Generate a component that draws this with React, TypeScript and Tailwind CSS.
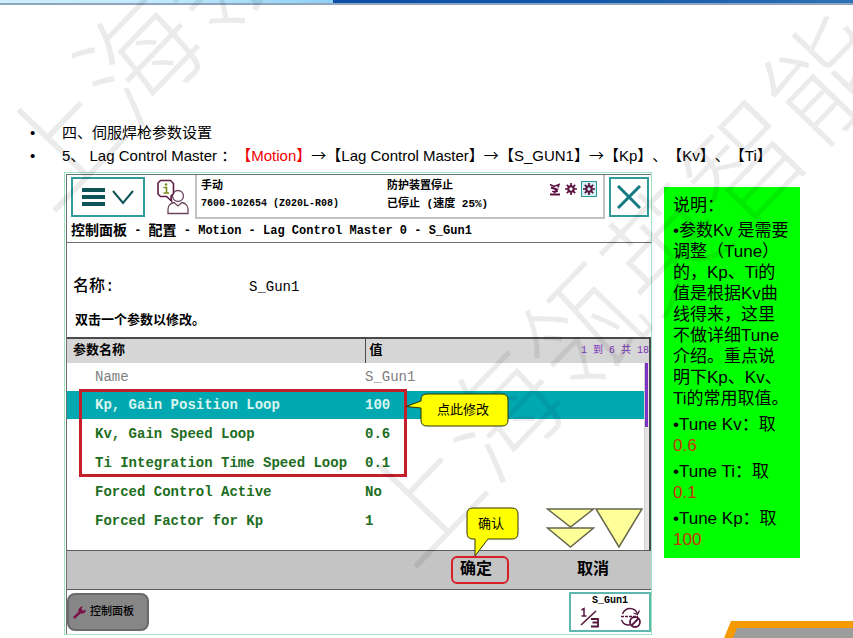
import { useState } from 'react';
import clsx from 'clsx';

interface Parameter {
  name: string;
  value: string;
  readOnly?: boolean;
}

const PARAMETERS: Parameter[] = [
  { name: 'Name', value: 'S_Gun1', readOnly: true },
  { name: 'Kp, Gain Position Loop', value: '100' },
  { name: 'Kv, Gain Speed Loop', value: '0.6' },
  { name: 'Ti Integration Time Speed Loop', value: '0.1' },
  { name: 'Forced Control Active', value: 'No' },
  { name: 'Forced Factor for Kp', value: '1' },
];

const NOTES = [
  { label: 'Tune Kv：取', value: '0.6' },
  { label: 'Tune Ti：取', value: '0.1' },
  { label: 'Tune Kp：取', value: '100' },
];

function MenuIcon() {
  return (
    <svg width="52" height="20" viewBox="0 0 52 20" fill="none">
      <path d="M0 3H23M0 10H23M0 17H23" stroke="#0d5457" strokeWidth="4" />
      <path d="M31 4L41 16L51 4" stroke="#0d5457" strokeWidth="2" />
    </svg>
  );
}

function OperatorIcon() {
  return (
    <svg width="32" height="36" viewBox="0 0 32 36" fill="none">
      <circle cx="21" cy="17" r="5.5" stroke="#6b4560" strokeWidth="1.3" />
      <path
        d="M11 34.5V30C11 26.500 14 24 17 23.500L21 27L25 23.500C28 24 31 26.500 31 30V34.500Z"
        stroke="#6b4560"
        strokeWidth="1.3"
        fill="#fff"
      />
      <path
        d="M3.500 1.500H13.500L16.500 4.500V14.500L14 17L14.500 22L9.500 17.500H3.500L1 15V4Z"
        stroke="#5e1c44"
        strokeWidth="1.6"
        fill="#fff"
      />
      <circle cx="9" cy="5.500" r="1.300" fill="#7f8a1c" />
      <path d="M6.500 8.500H9.500V13.500M6.500 14H12" stroke="#7f8a1c" strokeWidth="1.6" />
    </svg>
  );
}

function RobotIcon() {
  return (
    <svg width="12" height="13" viewBox="0 0 12 13" fill="none" stroke="#5c1240">
      <path d="M1 11.500H11" strokeWidth="2" />
      <path d="M5 10L8 6.500L2 4.500" strokeWidth="2" />
      <path d="M1 1.500L5 3.500L10 1.500L9 4.500" strokeWidth="1.500" />
      <path d="M3 8.500H9" strokeWidth="1.200" />
    </svg>
  );
}

function GearIcon() {
  return (
    <svg width="12" height="12" viewBox="0 0 12 12" fill="none" stroke="#5c1240">
      <circle cx="6" cy="6" r="2.700" strokeWidth="2" />
      <path d="M6 0V3M6 9V12M0 6H3M9 6H12M1.800 1.800L3.800 3.800M8.200 8.200L10.200 10.200M10.200 1.800L8.200 3.800M3.800 8.200L1.800 10.200" strokeWidth="1.700" />
    </svg>
  );
}

function CloseIcon() {
  return (
    <svg width="24" height="24" viewBox="0 0 24 24" stroke="#137a82" strokeWidth="3">
      <path d="M1 1L23 23M23 1L1 23" />
    </svg>
  );
}

function WrenchIcon() {
  return (
    <svg width="13" height="13" viewBox="0 0 13 13">
      <path
        d="M1.500 13L0 11L5.500 6C5 3.200 6.800 .8 9.800 .3L8.300 3L10 4.800L12.800 3.600C13 6.300 10.800 8.200 7.500 7.500Z"
        fill="#7a1048"
      />
    </svg>
  );
}

function SpeedIcon() {
  return (
    <svg width="22" height="22" viewBox="0 0 22 22" fill="none" stroke="#54163d">
      <path d="M3.500 3L6 1.500V9M3.500 9H8.500" strokeWidth="1.500" />
      <path d="M3 18L18 4" strokeWidth="1.600" />
      <path d="M13 12H20V19.500H13M14.500 15.500H20" strokeWidth="1.800" />
    </svg>
  );
}

function CycleIcon() {
  return (
    <svg width="22" height="22" viewBox="0 0 22 22" fill="none" stroke="#54163d">
      <path d="M2.500 7C4 3.500 6.500 1.500 10 1.500C13.500 1.500 16.500 4 17.500 7" strokeWidth="1.500" />
      <path d="M19.500 3.500L17.500 7.500L13.500 6" strokeWidth="1.300" />
      <path d="M1 9.500H18" strokeWidth="1.500" strokeDasharray="3 1" />
      <path d="M1.500 13C3 16.500 6 18.500 10 18" strokeWidth="1.500" />
      <circle cx="15" cy="15" r="5" strokeWidth="1.800" fill="#fff" />
      <path d="M11.500 18.500L18.500 11.500" strokeWidth="1.800" />
    </svg>
  );
}

function PageDownIcon() {
  return (
    <svg width="49" height="40" viewBox="0 0 49 40" fill="#ffff99" stroke="#66664d" strokeWidth="1.500">
      <path d="M1.500 1H47.500L24.500 19Z" />
      <path d="M1.500 20H47.500L24.500 39Z" />
    </svg>
  );
}

function LineDownIcon() {
  return (
    <svg width="48" height="40" viewBox="0 0 48 40" fill="#ffff99" stroke="#66664d" strokeWidth="1.500">
      <path d="M1 1H47L24 39Z" />
    </svg>
  );
}

function Arrow() {
  return <span className="font-['Noto_Sans_CJK_SC',sans-serif] leading-none">→</span>;
}

function Frame() {
  const [selected, setSelected] = useState(1);

  return (
    <section className="min-w-0 flex-1 border border-[#9fe3c0] bg-white pt-px pl-px font-['Liberation_Mono','Noto_Sans_CJK_SC',monospace] text-black">
      <div className="border-t border-l border-[#6f6f6f]">
        {/* Status bar */}
        <header className="flex h-11 items-center">
          <button
            aria-label="菜单"
            className="ml-1 flex h-10 w-[74px] shrink-0 items-center justify-center border-2 border-[#2f9c9c] bg-white"
          >
            <MenuIcon />
          </button>
          <div className="ml-3 shrink-0">
            <OperatorIcon />
          </div>
          <div className="ml-1.5 flex h-full min-w-0 flex-1 border-x-2 border-b-2 border-[#c4c0c4] pt-0.5 pl-1 font-bold">
            <div className="w-[186px] text-[11px] leading-[18px]">
              <p>手动</p>
              <p className="text-[10px] leading-[18px]">7600-102654 (Z020L-R08)</p>
            </div>
            <div className="flex-1 text-[11px] leading-[18px]">
              <p>防护装置停止</p>
              <p>已停止 (速度 25%)</p>
            </div>
            <div className="mt-1 mr-1.5 flex h-4 items-center gap-1">
              <RobotIcon />
              <GearIcon />
              <span className="border border-[#2f9c9c] bg-[#d5f0f0] p-px">
                <GearIcon />
              </span>
            </div>
          </div>
          <button
            aria-label="关闭"
            className="mr-0.5 ml-1 flex size-10 shrink-0 items-center justify-center border-2 border-[#2f9c9c] bg-white"
          >
            <CloseIcon />
          </button>
        </header>

        <h2 className="flex h-6 items-center border-b border-[#6f6f6f] pl-1 text-xs font-bold whitespace-pre">
          <span className="text-sm">控制面板</span> - <span className="text-sm">配置</span> - Motion - Lag Control Master 0 - S_Gun1
        </h2>

        <div className="h-[94px] pt-8 pl-1.5">
          <p className="flex items-center leading-6">
            <span className="w-44 text-base font-medium">名称:</span>
            <span className="text-sm font-medium">S_Gun1</span>
          </p>
          <p className="mt-3 pl-0.5 text-[13px] leading-5 font-bold">双击一个参数以修改。</p>
        </div>

        {/* Parameter list */}
        <div className="relative border-t-2 border-r-2 border-[#4a4a4a] pb-[15px]">
          <table className="w-full table-fixed border-collapse text-left text-sm">
            <thead>
              <tr className="h-6 bg-[#d6d6d6] text-[13px]">
                <th className="w-[298px] pl-1.5">参数名称</th>
                <th className="border-l border-[#4a4a4a] pl-1">
                  <span className="flex items-center justify-between">
                    值
                    <span className="text-[10px] font-normal text-[#7a35b8]">1 到 6 共 18</span>
                  </span>
                </th>
              </tr>
            </thead>
            <tbody>
              {PARAMETERS.map((param, i) => (
                <tr
                  key={param.name}
                  onClick={() => setSelected(i)}
                  className={clsx(
                    i < 2 ? 'h-7' : 'h-[29px]',
                    param.readOnly && 'text-[#808080]',
                    !param.readOnly && 'font-bold',
                    i === selected ? 'bg-[#00a9b2] text-[#d9f5ee]' : !param.readOnly && 'text-[#1d6e22]'
                  )}
                >
                  <td className="pl-7">{param.name}</td>
                  <td>{param.value}</td>
                </tr>
              ))}
            </tbody>
          </table>

          <div className="absolute top-6 right-0 bottom-0 w-[5px] border-l border-[#d0d0d0] bg-[#e4e4e4]">
            <div className="h-16 w-[3px] bg-[#7c33c4]" />
          </div>
          <div className="absolute right-1.5 bottom-0.5 flex">
            <button aria-label="下一页">
              <PageDownIcon />
            </button>
            <button aria-label="下一行">
              <LineDownIcon />
            </button>
          </div>

          {/* Highlight around the tuning parameters */}
          <div className="pointer-events-none absolute top-[50px] left-3 h-[88px] w-[328px] border-3 border-[#c4202c]" />
          <div className="absolute top-[54px] left-[338px] z-20 font-['Noto_Sans_CJK_SC',sans-serif]">
            <svg width="104" height="35" viewBox="0 0 104 35" fill="#ffff00" stroke="#333300">
              <path d="M22 1H97Q103 1 103 7V27Q103 33 97 33H22Q16 33 16 27V15L1 13.500L16 8V7Q16 1 22 1Z" />
            </svg>
            <span className="absolute inset-0 pt-1 pl-8 text-[13px] leading-6">点此修改</span>
          </div>
        </div>

        {/* Commands */}
        <div className="relative flex h-10 items-center justify-end border-t border-b border-[#5c5c5c] bg-[#c4c4c4] pr-[31px] text-base font-bold">
          <div className="relative mr-[57px]">
            <button className="h-7 w-[58px] rounded-md border-2 border-[#d81e28] pr-2">确定</button>
            <div className="absolute bottom-[27px] left-[15px] z-20 font-['Noto_Sans_CJK_SC',sans-serif] font-normal">
              <svg width="54" height="50" viewBox="0 0 54 50" fill="#ffff00" stroke="#333300">
                <path d="M7 1H46Q52 1 52 7V26Q52 32 46 32H22L9 49V32H7Q1 32 1 26V7Q1 1 7 1Z" />
              </svg>
              <span className="absolute inset-0 pt-1 pl-3 text-[13px] leading-6">确认</span>
            </div>
          </div>
          <button className="h-7 w-[54px]">取消</button>
        </div>

        {/* Task bar */}
        <footer className="flex h-11 items-center justify-between">
          <button className="flex h-[38px] w-[82px] items-center gap-1 rounded-lg border-2 border-[#6a6a6a] bg-[#868686] pl-1 text-[11px] font-medium">
            <WrenchIcon />
            控制面板
          </button>
          <button className="flex h-10 w-[82px] flex-col items-center justify-center border-2 border-[#5fb8b0] bg-white text-[10px] leading-3 font-bold">
            S_Gun1
            <span className="flex gap-5">
              <SpeedIcon />
              <CycleIcon />
            </span>
          </button>
        </footer>
      </div>
    </section>
  );
}

export default function App() {
  return (
    <div className="relative min-h-screen overflow-hidden bg-white font-['Liberation_Sans','Noto_Sans_CJK_SC',sans-serif] text-black">
      <div className="flex h-[5px] border-b-2 border-[#8fa5bd]">
        <div className="w-[39%] bg-linear-to-r from-[#cfeefb] via-[#bfe9fb] to-[#8fd0f5]" />
        <div className="flex-1 bg-linear-to-r from-[#0d4fa5] via-[#1257a9] to-[#2e72b8]" />
      </div>

      <ul className="mt-[116px] ml-[30px] list-none text-[15px] leading-[23px] whitespace-nowrap [text-spacing-trim:space-all]">
        <li className="flex">
          <span className="w-8">•</span>
          <span>四、伺服焊枪参数设置</span>
        </li>
        <li className="flex">
          <span className="w-8">•</span>
          <span>
            5、 Lag Control Master ：<span className="text-[#f00000]">【Motion】</span>
            <Arrow />
            【Lag Control Master】
            <Arrow />
            【S_GUN1】
            <Arrow />
            【Kp】、【Kv】、【Ti】
          </span>
        </li>
      </ul>

      <main className="mt-[5px] flex items-start gap-3 pr-[53px] pl-16">
        <Frame />
        <aside className="mt-[15px] w-[136px] shrink-0 bg-[#00ff00] px-[9px] py-2 text-[17px] leading-[21px]">
          <p>说明：</p>
          <p className="mt-1">
            •参数Kv 是需要调整（Tune）的，Kp、Ti的值是根据Kv曲线得来，这里不做详细Tune介绍。重点说明下Kp、Kv、Ti的常用取值。
          </p>
          {NOTES.map((note) => (
            <p key={note.label} className="mt-[5px]">
              •{note.label}
              <span className="block text-[#c83200]">{note.value}</span>
            </p>
          ))}
        </aside>
      </main>

      {/* Watermark */}
      <div
        aria-hidden="true"
        className="pointer-events-none absolute inset-0 z-10 overflow-hidden font-['Noto_Sans_CJK_SC',sans-serif] text-[117px] leading-none font-light whitespace-nowrap text-black/8"
      >
        <span className="absolute top-[80px] left-[-5px] origin-[58px_58px] -rotate-[46deg]">上海瓴英智能</span>
        <span className="absolute top-[436px] left-[356px] origin-[58px_58px] -rotate-[46deg]">上海瓴英智能</span>
      </div>

      <svg className="absolute right-0 bottom-0" width="130" height="18" viewBox="0 0 130 18">
        <path d="M1 18L8 1H130V18Z" fill="#f59a00" />
        <path d="M10 18L14 8H130V18Z" fill="#9c9c9c" />
      </svg>
    </div>
  );
}
